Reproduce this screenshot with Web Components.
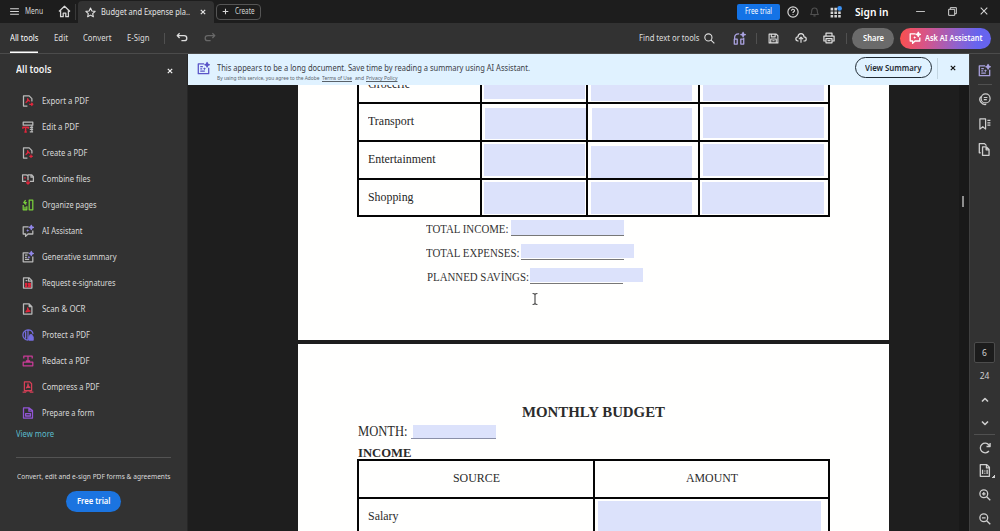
<!DOCTYPE html>
<html lang="en">
<head>
<meta charset="utf-8">
<title>Budget and Expense planner</title>
<style>
    html, body {
        margin: 0;
        height: 100%;
        overflow: hidden;
        background: #1d1d1d;
    }
</style>
</head>
<body>
<pdf-app></pdf-app>
<script>
const ICONS = {
    menu: '<path d="M2 5h16M2 10h16M2 15h16"/>',
    home: '<path d="M1.500 10 10 2l8.500 8M4 8.500V18h4v-5.500h4V18h4V8.500"/>',
    star: '<path d="m10 1.800 2.500 5.400 5.900.7-4.400 4 1.200 5.900-5.200-3-5.200 3L6 11.900l-4.400-4 5.900-.7z"/>',
    close: '<path d="m4.500 4.500 11 11m0-11-11 11"/>',
    plus: '<path d="M10 2v16M2 10h16"/>',
    help: '<circle cx="10" cy="10" r="8.500"/><path d="M7.500 8c0-3.600 5.200-3.400 5 0-.1 1.700-2.500 1.800-2.500 3.600M10 13.700v1.500"/>',
    bell: '<path d="M3 15.500c2-2 1.700-4 2-7 .4-6.500 9.600-6.500 10 0 .3 3 0 5 2 7zM8 18h4"/>',
    apps: '<g fill="currentColor" stroke="none"><path d="M1 3h4.300v4.300H1zM7.300 3h4.300v4.300H7.300zM1 9h4.300v4.300H1zM7.300 9h4.300v4.300H7.300zM13.600 9h4.300v4.300h-4.300zM1 15h4.300v4H1zM7.300 15h4.300v4H7.300zM13.600 15h4.300v4h-4.300z"/><circle cx="16" cy="4" r="3.900" fill="#3b92f5"/></g>',
    minimize: '<path d="M2 10h16"/>',
    restore: '<path d="M3 6h11v11H3zM6 6V3h11v11h-3"/>',
    undo: '<path d="M6 2 2 6l4 4M2 6h11.500c6 0 6 8.500 0 8.500H9"/>',
    redo: '<path d="m14 2 4 4-4 4M18 6H6.500c-6 0-6 8.500 0 8.500H11"/>',
    search: '<circle cx="8" cy="8" r="6.500"/><path d="m12.800 12.800 6 6"/>',
    listen: '<path d="M2.500 11V9c0-3.500 2.500-6 6-6h1M2 11h4.500v7.500H2zM12 11h4.500v7.500H12zM16.500 11V9"/><path d="m15.500.5.8 2.700L19 4l-2.700.8-.8 2.700-.8-2.700L12 4l2.700-.8z" fill="currentColor"/>',
    save: '<path d="M2 2h13l3 3v13H2zM6 2v5h7V2M5 18v-7h10v7M8 14h4"/>',
    cloud: '<path d="M6 15H5c-5-.3-4.500-7 0-7 .5-7 9.500-7 10 0 5 0 5 7 0 7h-1M10 18V8.500M6.500 12 10 8.500l3.500 3.500"/>',
    print: '<path d="M5 7V2h10v5M4 15H1.500V7h17v8H16M5 11h10v7H5zM7.500 14.500h5"/>',
    chat: '<path d="M11 3H2v12h4v4l4-4h8V9"/><path d="m15.500.5 1 2.500 2.500 1-2.500 1-1 2.500-1-2.500-2.500-1 2.500-1z" fill="var(--accent, currentColor)" stroke="var(--accent, currentColor)"/><path d="m9.500 6.500.8 1.700 1.700.8-1.700.8-.8 1.700-.8-1.700L7 9l1.700-.8z" fill="var(--accent, currentColor)" stroke="none"/>',
    summary: '<path d="M11 3H2v15h16V9M5 7h4M5 10.500h3M5 14h7"/><path d="m15.500.8 1 2.400 2.500 1-2.500 1-1 2.500-1-2.500-2.500-1 2.500-1z" fill="var(--accent, currentColor)" stroke="var(--accent, currentColor)"/><path d="m11.500 8 .8 1.700 1.700.8-1.700.8-.8 1.700-.8-1.700-1.700-.8 1.700-.8z" fill="var(--accent, currentColor)" stroke="none"/>',
    exportPdf: '<path d="M9 18.500H2.500V1.500H12l4.500 4.500v5"/><path stroke="#e0263c" d="M6 13c3-2 4-5 3.500-7 1 4 2.500 4 4 4.500M12 15.500h6M15.500 13l2.500 2.500-2.500 2.500"/>',
    createPdf: '<path d="M9 18.500H2.500V1.500H12l4.500 4.500v5"/><path stroke="#e0263c" d="M6 13c3-2 4-5 3.500-7 1 4 2.500 4 4 4.500M15 12.500v6M12 15.500h6"/>',
    editPdf: '<path d="M2 2h16v5H2zM13 10.500h5.500M13 14h5.500M13 18h5.500M16.500 7v11"/><path stroke="#e0263c" stroke-width="2.500" d="M1.500 13v-2.500h9V13M6 10.500v8M4 18.500h4"/>',
    combine: '<path d="M7 14H1V3h6l3 2v7M10 5V3h6l3 3v8h-6M15 3v4h4"/><path stroke="#e0263c" d="M5 6.500v3M10 12v6M7 15.500l3 3 3-3"/>',
    organize: '<path d="M12 2h6v16h-6zM8 6H3l3-4M3 6l4 3M2 10v8h6v-6M5 13v5"/>',
    sign: '<path d="M16.500 18.500h-14V1.500H12L16.500 6zM11 2v5h5M6 6h3"/><path stroke="#e0263c" fill="#e0263c" d="M6 10.500h2v2H6zM11 10.500h3v2h-3zM6 15h2v1.500H6zM11 15h3v1.500h-3z"/>',
    scan: '<path d="M2.500 1.500H12L16.500 6v12.500h-14zM12 2v4h4"/><path stroke="#e0263c" d="M6 15c3-2 4-5 3.500-7 .6 4 2 5 4 5.500L6 15"/>',
    protect: '<path d="M10 1.500a8.500 8.500 0 1 0 0 17M10 1.500v17M10 1.500c4 0 7.500 2.500 8.500 6.500M6 4v12"/><path fill="currentColor" d="M11.500 13h7v5.500h-7zM13 13v-2c0-2 4-2 4 0v2"/>',
    redact: '<path d="M3 6V2h14v4M10 2v8M6.500 10h7M2 12h16v6H2z"/>',
    compress: '<path d="M4 1.500h9l3 3v11.500H4zM1 18.500h6M13 18.500h6M7 12c2-1 3-4 3-7 0 4 1 5 3 5.500H8M8 16v2M12 16v2"/>',
    form: '<path d="M2.500 1.500H12L17.500 6v12.500h-15zM11.500 2v5H17M6 11h8v4H6z"/>',
    comments: '<circle cx="11" cy="9" r="7.500"/><path d="M3 6C-2 12 5 20.500 12 19M8 7.500h6M8 11h5"/>',
    bookmark: '<path d="M1.500 1.500h9.500v17l-4.700-4-4.800 4zM14 4h5M14 8h5M14 12h5"/>',
    pages: '<path d="M7 6h6l4 4v9H7zM12.500 6v4.500H17M4 15H2V1h8l3 3"/>',
    up: '<path d="m4 13 6-6 6 6"/>',
    down: '<path d="m4 7 6 6 6-6"/>',
    rotate: '<path d="M16.500 15A8 8 0 1 1 16.500 5L18 7.500M18.500 1.500v6h-6"/>',
    fit: '<path d="M2 1h10l4 4v14H2zM11.500 1v5H16M5.500 9v6.500M12.500 9v6.500M9 10v1.500M9 13.500V15"/>',
    zoomIn: '<circle cx="8" cy="8" r="6.500"/><path d="m12.800 12.800 6 6M8 5v6M5 8h6"/>',
    zoomOut: '<circle cx="8" cy="8" r="6.500"/><path d="m12.800 12.800 6 6M5 8h6"/>',
    beam: '<path d="M6 1c2 0 4 .5 4 2 0-1.500 2-2 4-2M10 3v14M6 19c2 0 4-.5 4-2 0 1.500 2 2 4 2"/>'
};

class UiIcon extends HTMLElement {
    constructor() {
        super();
        this.attachShadow({ mode: 'open' });
    }

    connectedCallback() {
        const size = this.getAttribute('size') || 12;
        const weight = this.getAttribute('weight') || 2;
        this.shadowRoot.innerHTML = `
            <style>
                :host { display: block; flex: none; width: ${size}px; height: ${size}px; }
                svg { display: block; overflow: visible; }
            </style>
            <svg width="${size}" height="${size}" viewBox="0 0 20 20" fill="none" stroke="currentColor" stroke-width="${weight}" stroke-linejoin="round">${ICONS[this.getAttribute('name')]}</svg>
        `;
    }
}

// A single line of text, condensed or stretched to the given width
class TextRun extends HTMLElement {
    constructor() {
        super();
        this.attachShadow({ mode: 'open' });
    }

    connectedCallback() {
        this.shadowRoot.innerHTML = `
            <style>
                :host { display: block; flex: none; white-space: nowrap; line-height: 1.3; }
                span { display: inline-block; transform-origin: 0 50%; text-decoration: var(--decoration, none); }
            </style>
            <span><slot></slot></span>
        `;
        const span = this.shadowRoot.querySelector('span');
        const width = parseFloat(this.getAttribute('width'));
        const natural = span.getBoundingClientRect().width;
        if (width) {
            span.style.transform = `scaleX(${width / natural})`;
            this.style.width = `${width}px`;
        }
    }
}

class TitleBar extends HTMLElement {
    constructor() {
        super();
        this.attachShadow({ mode: 'open' });
    }

    connectedCallback() {
        this.shadowRoot.innerHTML = `
            <style>
                :host {
                    display: flex;
                    align-items: center;
                    height: 23px;
                    background: #1d1d1d;
                    color: #d6d6d6;
                    font-size: 8px;
                }
                * { box-sizing: border-box; }
                .sep { width: 1px; height: 16px; margin-left: 4px; background: #3a3a3a; }
                .tab {
                    display: flex;
                    align-items: center;
                    align-self: flex-end;
                    width: 136px;
                    height: 22px;
                    margin-left: 2px;
                    padding: 0 7px 0 7px;
                    border-radius: 4px 4px 0 0;
                    background: #323232;
                    color: #e4e4e4;
                    font-size: 8.5px;
                }
                .tab text-run { margin: 0 auto 0 5px; }
                .create {
                    display: flex;
                    align-items: center;
                    gap: 6px;
                    width: 45px;
                    height: 16px;
                    margin-left: 2px;
                    padding-left: 5px;
                    border: 1px solid #555;
                    border-radius: 4px;
                }
                .trial {
                    display: grid;
                    place-items: center;
                    width: 43px;
                    height: 16px;
                    margin-left: auto;
                    border-radius: 2px;
                    background: #1473e6;
                    color: #fff;
                }
                .bell { color: #505050; }
                .sign { margin-bottom: -1px; color: #fff; font-size: 11px; font-weight: 600; }
            </style>
            <ui-icon name="menu" size="11" style="margin-left:9px"></ui-icon>
            <text-run width="18" style="margin-left:5px">Menu</text-run>
            <ui-icon name="home" size="13" weight="2" style="margin-left:15px"></ui-icon>
            <div class="sep"></div>
            <div class="tab">
                <ui-icon name="star" size="11"></ui-icon>
                <text-run width="89">Budget and Expense pla..</text-run>
                <ui-icon name="close" size="8" weight="3"></ui-icon>
            </div>
            <div class="create">
                <ui-icon name="plus" size="7" weight="3"></ui-icon>
                <text-run width="19.500">Create</text-run>
            </div>
            <div class="trial"><text-run width="27">Free trial</text-run></div>
            <ui-icon name="help" size="12" style="margin-left:7px"></ui-icon>
            <ui-icon class="bell" name="bell" size="11" style="margin-left:10px"></ui-icon>
            <ui-icon name="apps" size="12" style="margin-left:10px"></ui-icon>
            <text-run class="sign" width="33.500" style="margin-left:13px">Sign in</text-run>
            <ui-icon name="minimize" size="11" weight="1.600" style="margin-left:27px"></ui-icon>
            <ui-icon name="restore" size="11" weight="1.800" style="margin-left:21px"></ui-icon>
            <ui-icon name="close" size="12" weight="1.700" style="margin:-1px 10px 0 20px"></ui-icon>
        `;
    }
}

class ToolBar extends HTMLElement {
    constructor() {
        super();
        this.attachShadow({ mode: 'open' });
    }

    connectedCallback() {
        this.shadowRoot.innerHTML = `
            <style>
                :host {
                    box-sizing: border-box;
                    display: flex;
                    align-items: center;
                    height: 31px;
                    padding-left: 9.5px;
                    border-bottom: 1px solid #4b4b4b;
                    background: #323232;
                    color: #dedede;
                    font-size: 8.5px;
                }
                .active {
                    display: flex;
                    align-items: center;
                    align-self: stretch;
                    box-shadow: inset 0 -1.5px #fff;
                    color: #fff;
                }
                .sep { width: 1px; height: 11px; background: #505050; }
                .redo { color: #686868; }
                .pill {
                    display: flex;
                    align-items: center;
                    justify-content: center;
                    height: 21px;
                    border-radius: 11px;
                    color: #fff;
                    font-weight: 600;
                }
                .share { width: 42px; margin-left: 5px; background: #6b6b6b; }
                .ask {
                    gap: 4px;
                    width: 91px;
                    margin: 0 9px 0 6px;
                    background: linear-gradient(95deg, #fa504d, #d95486 27%, #8f62ce 63%, #6664ef 85%);
                }
            </style>
            <div class="active"><text-run width="28.500">All tools</text-run></div>
            <text-run width="14" style="margin-left:16px">Edit</text-run>
            <text-run width="28.500" style="margin-left:15px">Convert</text-run>
            <text-run width="22.500" style="margin-left:15.500px">E-Sign</text-run>
            <div class="sep" style="margin-left:14px"></div>
            <ui-icon name="undo" size="12" weight="2.200" style="margin-left:11px"></ui-icon>
            <ui-icon class="redo" name="redo" size="12" weight="2.200" style="margin-left:16px"></ui-icon>
            <text-run width="60.500" style="margin-left:auto">Find text or tools</text-run>
            <ui-icon name="search" size="11" style="margin-left:5px"></ui-icon>
            <ui-icon name="listen" size="13" style="margin-left:18px;color:#aaa2e0"></ui-icon>
            <div class="sep" style="margin-left:10px"></div>
            <ui-icon name="save" size="11" style="margin-left:11px"></ui-icon>
            <ui-icon name="cloud" size="12" style="margin-left:16px"></ui-icon>
            <ui-icon name="print" size="12" style="margin-left:16px"></ui-icon>
            <div class="sep" style="margin-left:11px"></div>
            <div class="pill share"><text-run width="21">Share</text-run></div>
            <div class="pill ask">
                <ui-icon name="chat" size="12" weight="2.200"></ui-icon>
                <text-run width="57.500">Ask AI Assistant</text-run>
            </div>
        `;
    }
}

class ToolItem extends HTMLElement {
    constructor() {
        super();
        this.attachShadow({ mode: 'open' });
    }

    connectedCallback() {
        this.shadowRoot.innerHTML = `
            <style>
                :host {
                    display: flex;
                    align-items: center;
                    gap: 7.5px;
                    height: 26px;
                    padding-left: 22px;
                }
                ui-icon { color: ${this.getAttribute('tint') || '#b9b9b9'}; --accent: #9187e8; }
            </style>
            <ui-icon name="${this.getAttribute('icon')}" size="12" weight="2.100"></ui-icon>
            <slot></slot>
        `;
    }
}

const TOOLS = [
    ['exportPdf', 'Export a PDF', 47],
    ['editPdf', 'Edit a PDF', 37],
    ['createPdf', 'Create a PDF', 45.5],
    ['combine', 'Combine files', 48.5],
    ['organize', 'Organize pages', 54.5, '#79cf3b'],
    ['chat', 'AI Assistant', 40.5],
    ['summary', 'Generative summary', 74.5],
    ['sign', 'Request e-signatures', 73.5],
    ['scan', 'Scan &amp; OCR', 43.5],
    ['protect', 'Protect a PDF', 48, '#756de0'],
    ['redact', 'Redact a PDF', 47.5, '#c83b96'],
    ['compress', 'Compress a PDF', 57.5, '#d63f57'],
    ['form', 'Prepare a form', 52.5, '#9155d5']
];

class ToolPanel extends HTMLElement {
    constructor() {
        super();
        this.attachShadow({ mode: 'open' });
    }

    connectedCallback() {
        const items = TOOLS.map(([icon, label, width, tint]) =>
            `<tool-item icon="${icon}" tint="${tint || ''}"><text-run width="${width}">${label}</text-run></tool-item>`
        ).join('');
        this.shadowRoot.innerHTML = `
            <style>
                :host {
                    display: flex;
                    flex-direction: column;
                    background: #323232;
                    border-right: 1px solid #272727;
                    color: #dadada;
                    font-size: 8.4px;
                }
                header {
                    display: flex;
                    align-items: center;
                    justify-content: space-between;
                    height: 30px;
                    margin-bottom: 4px;
                    padding: 0 13px 0 15.5px;
                    color: #f4f4f4;
                    font-size: 10px;
                    font-weight: 600;
                }
                header ui-icon { margin-top: 4px; }
                .more { margin: 3px 0 0 16px; color: #5bbccc; }
                hr {
                    width: 155px;
                    margin: 17px 0 13px 16px;
                    border: 0;
                    border-top: 1px solid #535353;
                }
                .note { margin-left: 17px; font-size: 7.7px; }
                .trial {
                    display: grid;
                    place-items: center;
                    width: 55px;
                    height: 21px;
                    margin: 10px 0 0 66px;
                    border-radius: 11px;
                    background: #1b74e0;
                    color: #fff;
                    font-weight: 600;
                }
            </style>
            <header>
                <text-run width="35.500">All tools</text-run>
                <ui-icon name="close" size="8" weight="3"></ui-icon>
            </header>
            ${items}
            <text-run class="more" width="38">View more</text-run>
            <hr>
            <text-run class="note" width="153.500">Convert, edit and e-sign PDF forms &amp; agreements</text-run>
            <div class="trial"><text-run width="33.500">Free trial</text-run></div>
        `;
    }
}

class SummaryBanner extends HTMLElement {
    constructor() {
        super();
        this.attachShadow({ mode: 'open' });
    }

    connectedCallback() {
        this.shadowRoot.innerHTML = `
            <style>
                :host {
                    box-sizing: border-box;
                    display: flex;
                    align-items: flex-start;
                    height: 31px;
                    padding-left: 9px;
                    background: #e0f2ff;
                    color: #3b4046;
                    font-size: 8.5px;
                }
                .icon { margin-top: 8px; color: #5b55c8; }
                .copy { margin: 8px auto 0 7px; }
                .copy text-run { line-height: 12px; }
                .legal { display: flex; gap: 2.5px; color: #59626a; font-size: 5.6px; }
                .legal text-run { line-height: 8px; height: 8px; }
                .link { --decoration: underline; }
                .view {
                    box-sizing: border-box;
                    display: grid;
                    place-items: center;
                    width: 77px;
                    height: 21px;
                    margin-top: 3px;
                    border: 1.5px solid #1f2a33;
                    border-radius: 11px;
                    color: #1f2a33;
                    font-weight: 600;
                }
                .sep { width: 1px; height: 21px; margin: 4px 11px 0 5px; background: #c3d6e2; }
                .close { margin: 10px 12px 0 0; color: #111; }
            </style>
            <ui-icon class="icon" name="summary" size="13"></ui-icon>
            <div class="copy">
                <text-run width="313">This appears to be a long document. Save time by reading a summary using AI Assistant.</text-run>
                <div class="legal">
                    <text-run width="102.500">By using this service, you agree to the Adobe</text-run>
                    <text-run class="link" width="30">Terms of Use</text-run>
                    <text-run width="9">and</text-run>
                    <text-run class="link" width="31.500">Privacy Policy</text-run>
                </div>
            </div>
            <div class="view"><text-run width="56.500">View Summary</text-run></div>
            <div class="sep"></div>
            <ui-icon class="close" name="close" size="8" weight="3"></ui-icon>
        `;
    }
}

// Fillable area of the form; inset is the space left round it inside its cell
class FormField extends HTMLElement {
    constructor() {
        super();
        this.attachShadow({ mode: 'open' });
    }

    connectedCallback() {
        this.shadowRoot.innerHTML = `
            <style>
                :host { display: block; padding: ${this.getAttribute('inset') || 0}; box-sizing: border-box; }
                div { height: 100%; background: #dce2fb; }
            </style>
            <div></div>
        `;
    }
}

class ExpensePage extends HTMLElement {
    constructor() {
        super();
        this.attachShadow({ mode: 'open' });
    }

    connectedCallback() {
        this.shadowRoot.innerHTML = `
            <style>
                :host {
                    position: relative;
                    display: block;
                    height: 255px;
                    overflow: hidden;
                    background: #fffffe;
                    color: #252525;
                    font: 13px "Liberation Serif", serif;
                }
                .grid {
                    display: grid;
                    grid-template: 17px 36px 36px 35px / 121px 104px 110px 128px;
                    gap: 2px;
                    width: 469px;
                    margin-left: 59px;
                    padding: 0 2px 2px;
                    background: #050505;
                }
                .grid > * { background: #fffffe; }
                .label { display: flex; align-items: center; padding: 0 0 2px 9px; }
                .label:last-of-type { padding-bottom: 0; }
                .first { align-items: flex-start; padding: 0 0 0 9px; overflow: hidden; }
                .first text-run { margin-top: -9px; }
                .total { display: flex; color: #333; }
                .total text-run { margin-top: 1px; }
                .line { box-sizing: border-box; border-bottom: 1px solid #777; }
                .cursor { position: absolute; left: 231px; top: 208px; color: #333; }
            </style>
            <div class="grid">
                <div class="label first"><text-run width="42">Grocerie</text-run></div>
                <form-field inset="0 1px 3px 2px"></form-field>
                <form-field inset="0 6px 1px 3px"></form-field>
                <form-field inset="0 4.500px 1px 3px"></form-field>

                <div class="label"><text-run width="46">Transport</text-run></div>
                <form-field inset="4px 0 1px 3px"></form-field>
                <form-field inset="4px 6px 0 4px"></form-field>
                <form-field inset="3px 4.500px 2px 3px"></form-field>

                <div class="label"><text-run width="67.500">Entertainment</text-run></div>
                <form-field inset="2px 1px 2px 2px"></form-field>
                <form-field inset="4px 6px 0 3px"></form-field>
                <form-field inset="2px 4.500px 2px 3px"></form-field>

                <div class="label"><text-run width="45.500">Shopping</text-run></div>
                <form-field inset="2px 1px 1px 2px"></form-field>
                <form-field inset="2px 6px 1px 3px"></form-field>
                <form-field inset="2px 4.500px 1px 2px"></form-field>
            </div>
            <div class="total" style="margin:3px 0 0 128px">
                <text-run width="82.500">TOTAL INCOME:</text-run>
                <div class="line" style="width:113px;height:16px;margin-left:2.500px"><form-field style="width:113px;height:15px"></form-field></div>
            </div>
            <div class="total" style="margin:6px 0 0 128px">
                <text-run width="93.500">TOTAL EXPENSES:</text-run>
                <div class="line" style="width:103px;height:16px;margin-left:1px"><form-field style="width:113px;height:14px"></form-field></div>
            </div>
            <div class="total" style="margin:6px 0 0 128.500px">
                <text-run width="102">PLANNED SAVİNGS:</text-run>
                <div class="line" style="width:93px;height:16px;margin-left:1.500px"><form-field style="width:112.500px;height:14px"></form-field></div>
            </div>
            <ui-icon class="cursor" name="beam" size="12" weight="1.700"></ui-icon>
        `;
    }
}

class BudgetPage extends HTMLElement {
    constructor() {
        super();
        this.attachShadow({ mode: 'open' });
    }

    connectedCallback() {
        this.shadowRoot.innerHTML = `
            <style>
                :host {
                    display: block;
                    height: 187px;
                    margin-top: 4px;
                    overflow: hidden;
                    background: #fffffe;
                    color: #2b2b2b;
                    font: 13px "Liberation Serif", serif;
                }
                h1, h2 { margin: 0; font-weight: bold; }
                h1 { height: 20px; padding: 58px 0 0 224px; font-size: 15.5px; }
                .month { display: flex; height: 21px; margin: 3px 0 0 59.5px; font-size: 14px; }
                .line {
                    box-sizing: border-box;
                    width: 85px;
                    height: 14px;
                    margin-left: 3.5px;
                    padding-left: 2.5px;
                    border-bottom: 1px solid #8a8fa8;
                }
                h2 { height: 13px; margin: 0 0 0 59.5px; font-size: 13.5px; line-height: 1; }
                h2 text-run { line-height: 13px; }
                .grid {
                    display: grid;
                    grid-template: 36px 38px / 234px 233px;
                    gap: 2px;
                    width: 469px;
                    margin-left: 59px;
                    padding: 2px;
                    background: #050505;
                }
                .grid > * { background: #fffffe; }
                .head { display: grid; place-items: center; padding-bottom: 1px; }
                .label { display: flex; align-items: center; padding: 0 0 3px 9px; }
            </style>
            <h1><text-run width="143">MONTHLY BUDGET</text-run></h1>
            <div class="month">
                <text-run width="49.500" style="margin-top:-2px">MONTH:</text-run>
                <div class="line"><form-field style="height:13px"></form-field></div>
            </div>
            <h2><text-run width="53.500">INCOME</text-run></h2>
            <div class="grid">
                <div class="head"><text-run width="47">SOURCE</text-run></div>
                <div class="head"><text-run width="52">AMOUNT</text-run></div>
                <div class="label"><text-run width="30.500">Salary</text-run></div>
                <form-field inset="2px 7px 0 3px"></form-field>
            </div>
        `;
    }
}

class DocumentView extends HTMLElement {
    constructor() {
        super();
        this.attachShadow({ mode: 'open' });
    }

    connectedCallback() {
        this.shadowRoot.innerHTML = `
            <style>
                :host { display: grid; grid-template-rows: 31px 1fr; overflow: hidden; }
                .canvas {
                    display: grid;
                    grid-template-columns: 591px 10px;
                    justify-content: space-between;
                    padding-left: 110px;
                    overflow: hidden;
                    background: #1e1e1e;
                }
                .track { background: #191919; }
                .thumb { width: 2px; height: 11px; margin: 111px 0 0 3px; background: #8d8d8d; }
            </style>
            <summary-banner></summary-banner>
            <div class="canvas">
                <div>
                    <expense-page></expense-page>
                    <budget-page></budget-page>
                </div>
                <div class="track"><div class="thumb"></div></div>
            </div>
        `;
    }
}

class SideRail extends HTMLElement {
    constructor() {
        super();
        this.attachShadow({ mode: 'open' });
    }

    connectedCallback() {
        this.shadowRoot.innerHTML = `
            <style>
                :host {
                    box-sizing: border-box;
                    display: flex;
                    flex-direction: column;
                    align-items: center;
                    justify-content: space-between;
                    padding: 10px 1px 6px 0;
                    border-left: 1px solid #404040;
                    background: #323232;
                    color: #cfcfcf;
                    font-size: 8.5px;
                }
                nav { display: flex; flex-direction: column; align-items: center; }
                .tabs { gap: 13px; }
                hr { width: 21px; margin: 0; border: 0; border-top: 1px solid #505050; }
                .tabs hr { margin: -6px 0 -5px; width: 14px; }
                .ai { color: #a8a0dc; }
                .page {
                    box-sizing: border-box;
                    display: grid;
                    place-items: center;
                    width: 21px;
                    height: 21px;
                    border: 1px solid #4c4c4c;
                    border-radius: 2px;
                    background: #1c1c1c;
                }
                .fit { display: flex; align-items: flex-end; margin: 10px -4px 0 0; }
                .corner { width: 3px; height: 3px; margin-bottom: -1px; background: linear-gradient(135deg, transparent 40%, #cfcfcf 40%); }
            </style>
            <nav class="tabs">
                <ui-icon class="ai" name="summary" size="13"></ui-icon>
                <hr>
                <ui-icon name="comments" size="12"></ui-icon>
                <ui-icon name="bookmark" size="12"></ui-icon>
                <ui-icon name="pages" size="13"></ui-icon>
            </nav>
            <nav>
                <div class="page"><text-run>6</text-run></div>
                <text-run style="margin-top:7px">24</text-run>
                <ui-icon name="up" size="10" weight="3.200" style="margin-top:14px"></ui-icon>
                <ui-icon name="down" size="10" weight="3.200" style="margin-top:13px"></ui-icon>
                <hr style="margin-top:6px">
                <ui-icon name="rotate" size="12" weight="2.200" style="margin-top:7px"></ui-icon>
                <div class="fit"><ui-icon name="fit" size="13"></ui-icon><div class="corner"></div></div>
                <ui-icon name="zoomIn" size="12" weight="2.200" style="margin-top:12px"></ui-icon>
                <ui-icon name="zoomOut" size="12" weight="2.200" style="margin-top:12px"></ui-icon>
            </nav>
        `;
    }
}

class PdfApp extends HTMLElement {
    constructor() {
        super();
        this.attachShadow({ mode: 'open' });
    }

    connectedCallback() {
        this.shadowRoot.innerHTML = `
            <style>
                :host {
                    display: grid;
                    grid-template-rows: 23px 31px 477px;
                    width: 1000px;
                    height: 531px;
                    overflow: hidden;
                    font-family: "Noto Sans", "Open Sans", sans-serif;
                }
                main { display: grid; grid-template-columns: 188px 781px 31px; min-height: 0; }
            </style>
            <title-bar></title-bar>
            <tool-bar></tool-bar>
            <main>
                <tool-panel></tool-panel>
                <document-view></document-view>
                <side-rail></side-rail>
            </main>
        `;
    }
}

customElements.define('ui-icon', UiIcon);
customElements.define('text-run', TextRun);
customElements.define('title-bar', TitleBar);
customElements.define('tool-bar', ToolBar);
customElements.define('tool-item', ToolItem);
customElements.define('tool-panel', ToolPanel);
customElements.define('summary-banner', SummaryBanner);
customElements.define('form-field', FormField);
customElements.define('expense-page', ExpensePage);
customElements.define('budget-page', BudgetPage);
customElements.define('document-view', DocumentView);
customElements.define('side-rail', SideRail);
customElements.define('pdf-app', PdfApp);
</script>
</body>
</html>
